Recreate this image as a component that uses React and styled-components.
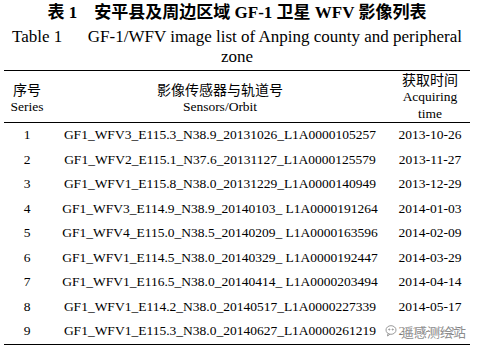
import React from 'react';
import styled, { createGlobalStyle } from 'styled-components';

const GlobalStyle = createGlobalStyle`
  body {
    margin: 0;
    background: #ffffff;
    color: #000000;
    font-family: 'Liberation Serif', 'Noto Sans CJK SC', serif;
  }
`;

const Page = styled.div`
  width: 466px;
  padding: 3px 8px 0 4px;
`;

const Caption = styled.div`
  text-align: center;
  margin-bottom: 3px;
`;

const CaptionCn = styled.div`
  font-size: 17px;
  font-weight: bold;
  line-height: 20px;
  margin-bottom: 4px;
  white-space: pre;
`;

const CaptionEn = styled.div`
  font-size: 17px;
  line-height: 20px;
  padding: 0 2px;
`;

const TableWrap = styled.div`
  position: relative;
`;

const Table = styled.table`
  width: 466px;
  table-layout: fixed;
  border-collapse: collapse;
  border-top: 1px solid #000;
  border-bottom: 1px solid #000;
  font-size: 13.5px;
`;

const Th = styled.th`
  width: ${(p) => p.$w}px;
  height: ${(p) => 51 - p.$top}px;
  padding: ${(p) => p.$top}px 0 0;
  font-weight: normal;
  line-height: 17px;
  text-align: center;
  vertical-align: middle;
  border-bottom: 1px solid #000;
`;

const Cn = styled.div`
  font-family: 'Noto Sans CJK SC', sans-serif;
  font-size: 14px;
`;

const Td = styled.td`
  height: 24.5px;
  padding: 0;
  text-align: center;
  vertical-align: middle;
  white-space: pre;
`;

const Watermark = styled.div`
  position: absolute;
  right: 4px;
  bottom: 4px;
  display: flex;
  align-items: center;
  gap: 2px;
  font-family: 'Noto Sans CJK SC', sans-serif;
  font-size: 13px;
  color: rgba(120, 120, 120, 0.85);
  background: rgba(255, 255, 255, 0.45);
  text-shadow: 0 0 2px #fff, 0 0 1px #fff;
`;

const rows = [
  ['1', 'GF1_WFV3_E115.3_N38.9_20131026_L1A0000105257', '2013-10-26'],
  ['2', 'GF1_WFV2_E115.1_N37.6_20131127_L1A0000125579', '2013-11-27'],
  ['3', 'GF1_WFV1_E115.8_N38.0_20131229_L1A0000140949', '2013-12-29'],
  ['4', 'GF1_WFV3_E114.9_N38.9_20140103_ L1A0000191264', '2014-01-03'],
  ['5', 'GF1_WFV4_E115.0_N38.5_20140209_ L1A0000163596', '2014-02-09'],
  ['6', 'GF1_WFV1_E114.5_N38.0_20140329_ L1A0000192447', '2014-03-29'],
  ['7', 'GF1_WFV1_E116.5_N38.0_20140414_ L1A0000203494', '2014-04-14'],
  ['8', 'GF1_WFV1_E114.2_N38.0_20140517_L1A0000227339', '2014-05-17'],
  ['9', 'GF1_WFV1_E115.3_N38.0_20140627_L1A0000261219', '2014-06-27'],
];

const App = () => (
  <>
    <GlobalStyle />
    <Page>
      <Caption>
        <CaptionCn>表 1　安平县及周边区域 GF-1 卫星 WFV 影像列表</CaptionCn>
        <CaptionEn>
          Table 1{'\u2003\u2002'}GF-1/WFV image list of Anping county and peripheral zone
        </CaptionEn>
      </Caption>
      <TableWrap>
        <Table>
          <thead>
            <tr>
              <Th $w={46} $top={3}>
                <Cn>序号</Cn>
                Series
              </Th>
              <Th $w={340} $top={3}>
                <Cn>影像传感器与轨道号</Cn>
                Sensors/Orbit
              </Th>
              <Th $w={80} $top={0}>
                <Cn>获取时间</Cn>
                Acquiring
                <br />
                time
              </Th>
            </tr>
          </thead>
          <tbody>
            {rows.map((r) => (
              <tr key={r[0]}>
                <Td>{r[0]}</Td>
                <Td>{r[1]}</Td>
                <Td>{r[2]}</Td>
              </tr>
            ))}
          </tbody>
        </Table>
        <Watermark>
          <svg width="14" height="14" viewBox="0 0 14 14" fill="none" stroke="#9a9a9a" strokeWidth="1">
            <ellipse cx="6" cy="6" rx="5" ry="4.3" />
            <path d="M3 9.5 L2.5 12 L5 10.2" />
            <circle cx="4.3" cy="5.5" r="0.6" fill="#9a9a9a" />
            <circle cx="7.7" cy="5.5" r="0.6" fill="#9a9a9a" />
          </svg>
          <span>遥感测绘站</span>
        </Watermark>
      </TableWrap>
    </Page>
  </>
);

export default App;
